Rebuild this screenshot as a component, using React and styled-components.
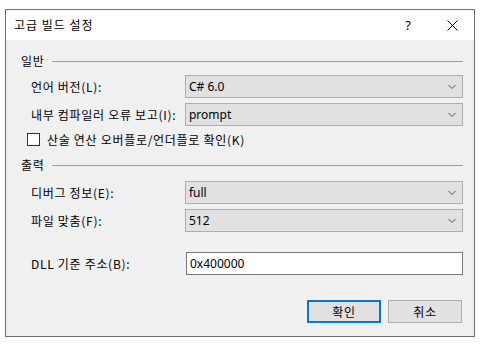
import styled, { createGlobalStyle } from "styled-components";

const GlobalStyle = createGlobalStyle`
  html, body {
    margin: 0;
    background: #fff;
  }
  body {
    font-family: "Noto Sans CJK KR", "Noto Sans", sans-serif;
    font-size: 12px;
    letter-spacing: 0.7px;
    color: #000;
  }
`;

const Page = styled.div`
  padding: 9px 0 0 5px;
`;

const Dialog = styled.div`
  width: 468px;
  border: 1px solid #6f6f6f;
  background: #f0f0f0;
  display: flex;
  flex-direction: column;
`;

const TitleBar = styled.div`
  height: 30px;
  background: #fff;
  display: flex;
  align-items: center;
  padding-left: 8px;
  line-height: 1;
`;

const Title = styled.div`
  flex: 1;
  letter-spacing: 1px;
`;

const TitleButton = styled.div`
  width: 44px;
  height: 30px;
  display: flex;
  align-items: center;
  justify-content: center;
  font-family: "Noto Sans", sans-serif;
  font-size: 13px;
  letter-spacing: 0;
`;

const Body = styled.div`
  padding: 12px 11px 13px 15px;
  display: flex;
  flex-direction: column;
`;

const GroupHeader = styled.div`
  height: 16px;
  display: flex;
  align-items: center;
  gap: 8px;
  margin-top: ${(p) => p.$top || 0}px;

  &::after {
    content: "";
    flex: 1;
    height: 1px;
    background: #a0a0a0;
    margin-top: 2px;
  }
`;

const Row = styled.div`
  display: flex;
  align-items: center;
  padding-left: 10px;
  margin-top: ${(p) => p.$top || 0}px;
`;

const Label = styled.div`
  width: 155px;
`;

const Combo = styled.div`
  width: 275px;
  height: 21px;
  border: 1px solid #adadad;
  background: #e1e1e1;
  display: flex;
  align-items: center;
  padding: 0 0 0 3px;
  font-family: "Noto Sans", sans-serif;
  font-size: 12px;
  letter-spacing: 0;

  span {
    flex: 1;
  }
`;

const Input = styled.div`
  width: 272px;
  height: 21px;
  border: 1px solid #7a7a7a;
  background: #fff;
  display: flex;
  align-items: center;
  padding-left: 3px;
  font-family: "Noto Sans", sans-serif;
  letter-spacing: 0;
`;

const CheckRow = styled.label`
  display: flex;
  align-items: center;
  gap: 7px;
  padding-left: 6px;
  margin-top: 7px;
  height: 13px;
`;

const Box = styled.span`
  width: 11px;
  height: 11px;
  border: 1px solid #333;
  background: #fff;
`;

const Buttons = styled.div`
  display: flex;
  justify-content: flex-end;
  gap: 7px;
  margin-top: 25px;
  padding-right: 1px;
`;

const Button = styled.div`
  width: ${(p) => (p.$default ? 70 : 72)}px;
  height: ${(p) => (p.$default ? 19 : 21)}px;
  border: ${(p) => (p.$default ? "2px solid #0078d7" : "1px solid #adadad")};
  background: #e1e1e1;
  display: flex;
  align-items: center;
  justify-content: center;
`;

const Chevron = () => (
  <svg width="20" height="21" viewBox="0 0 20 21">
    <path d="M6.5 9 L10 12.5 L13.5 9" fill="none" stroke="#555" strokeWidth="1" />
  </svg>
);

const Close = () => (
  <svg width="11" height="11" viewBox="0 0 11 11">
    <path d="M0.5 0.5 L10.5 10.5 M10.5 0.5 L0.5 10.5" stroke="#000" strokeWidth="1" />
  </svg>
);

const Select = ({ value }) => (
  <Combo>
    <span>{value}</span>
    <Chevron />
  </Combo>
);

export default function App() {
  return (
    <Page>
      <GlobalStyle />
      <Dialog>
        <TitleBar>
          <Title>고급 빌드 설정</Title>
          <TitleButton>?</TitleButton>
          <TitleButton>
            <Close />
          </TitleButton>
        </TitleBar>
        <Body>
          <GroupHeader>일반</GroupHeader>
          <Row $top={7}>
            <Label>언어 버전(L):</Label>
            <Select value="C# 6.0" />
          </Row>
          <Row $top={5}>
            <Label>내부 컴파일러 오류 보고(I):</Label>
            <Select value="prompt" />
          </Row>
          <CheckRow>
            <Box />
            산술 연산 오버플로/언더플로 확인(K)
          </CheckRow>
          <GroupHeader $top={10}>출력</GroupHeader>
          <Row $top={9}>
            <Label>디버그 정보(E):</Label>
            <Select value="full" />
          </Row>
          <Row $top={5}>
            <Label>파일 맞춤(F):</Label>
            <Select value="512" />
          </Row>
          <Row $top={20}>
            <Label>DLL 기준 주소(B):</Label>
            <Input>0x400000</Input>
          </Row>
          <Buttons>
            <Button $default>확인</Button>
            <Button>취소</Button>
          </Buttons>
        </Body>
      </Dialog>
    </Page>
  );
}
